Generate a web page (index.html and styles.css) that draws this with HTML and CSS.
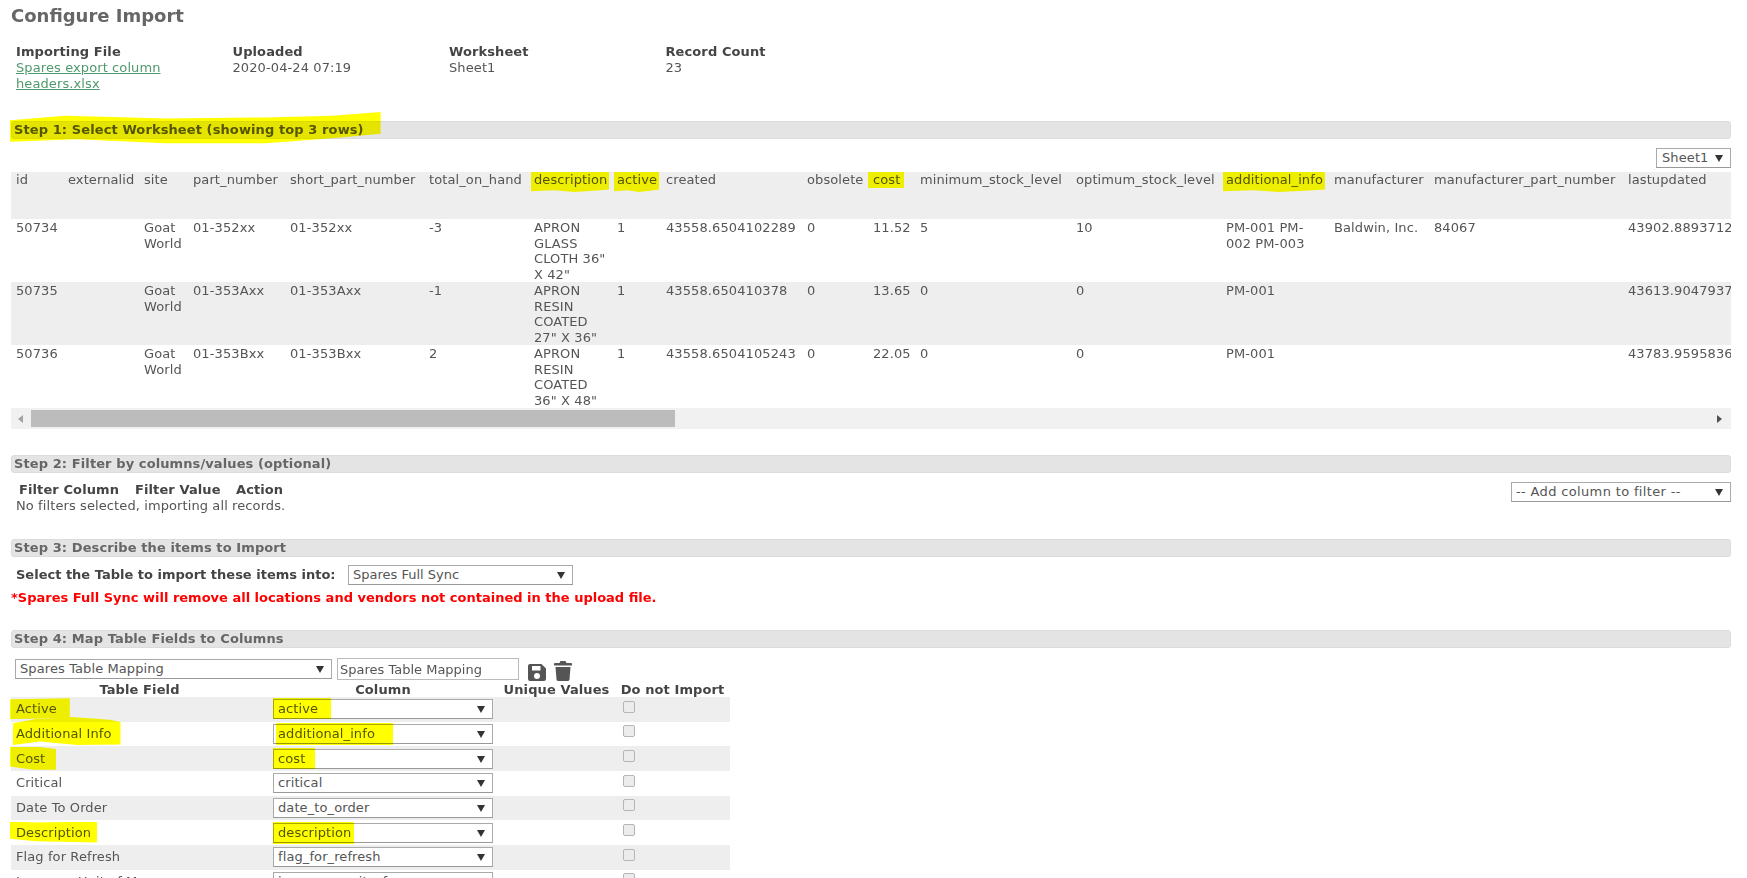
FILE: index.html
```html
<!DOCTYPE html>
<html lang="en">
<head>
    <meta charset="UTF-8">
    <meta name="viewport" content="width=device-width, initial-scale=1.0">
    <title>Configure Import</title>
    <link rel="stylesheet" href="styles.css">
</head>
<body>

<h1>Configure Import</h1>

<div class="file-info">
    <div><b>Importing File</b><br><a href="#">Spares export column headers.xlsx</a></div>
    <div><b>Uploaded</b><br>2020-04-24 07:19</div>
    <div><b>Worksheet</b><br>Sheet1</div>
    <div><b>Record Count</b><br>23</div>
</div>

<div class="step step-1"><span class="hl hl-step">Step 1: Select Worksheet (showing top 3 rows)</span></div>

<div class="sheet-row">
    <div class="sel sel-sheet">Sheet1</div>
</div>

<div class="preview">
    <table class="preview-table">
        <colgroup>
            <col class="c52"><col class="c76"><col class="c49"><col class="c97"><col class="c139"><col class="c105">
            <col class="c83"><col class="c49"><col class="c141"><col class="c66"><col class="c47"><col class="c156">
            <col class="c150"><col class="c108"><col class="c100"><col class="c194"><col class="c200">
        </colgroup>
        <tr>
            <th>id</th><th>externalid</th><th>site</th><th>part_number</th><th>short_part_number</th><th>total_on_hand</th>
            <th><span class="hl">description</span></th><th><span class="hl">active</span></th><th>created</th><th>obsolete</th>
            <th><span class="hl hl-up">cost</span></th><th>minimum_stock_level</th><th>optimum_stock_level</th>
            <th><span class="hl">additional_info</span></th><th>manufacturer</th><th>manufacturer_part_number</th><th>lastupdated</th>
        </tr>
        <tr>
            <td>50734</td><td></td><td>Goat World</td><td>01-352xx</td><td>01-352xx</td><td>-3</td>
            <td>APRON GLASS CLOTH 36" X 42"</td><td>1</td><td>43558.6504102289</td><td>0</td><td>11.52</td><td>5</td><td>10</td>
            <td class="info">PM-001 PM-002 PM-003</td><td>Baldwin, Inc.</td><td>84067</td><td>43902.8893712963</td>
        </tr>
        <tr>
            <td>50735</td><td></td><td>Goat World</td><td>01-353Axx</td><td>01-353Axx</td><td>-1</td>
            <td>APRON RESIN COATED 27" X 36"</td><td>1</td><td>43558.650410378</td><td>0</td><td>13.65</td><td>0</td><td>0</td>
            <td class="info">PM-001</td><td></td><td></td><td>43613.9047937269</td>
        </tr>
        <tr>
            <td>50736</td><td></td><td>Goat World</td><td>01-353Bxx</td><td>01-353Bxx</td><td>2</td>
            <td>APRON RESIN COATED 36" X 48"</td><td>1</td><td>43558.6504105243</td><td>0</td><td>22.05</td><td>0</td><td>0</td>
            <td class="info">PM-001</td><td></td><td></td><td>43783.9595836227</td>
        </tr>
    </table>
</div>

<div class="scrollbar">
    <span class="arrow-left"></span>
    <div class="scroll-track"><div class="scroll-thumb"></div></div>
    <span class="arrow-right"></span>
</div>

<div class="step step-2">Step 2: Filter by columns/values (optional)</div>

<div class="filters">
    <div>
        <div class="filter-head"><b>Filter Column</b><b>Filter Value</b><b>Action</b></div>
        <div class="filter-none">No filters selected, importing all records.</div>
    </div>
    <div class="sel sel-filter">-- Add column to filter --</div>
</div>

<div class="step step-3">Step 3: Describe the items to Import</div>

<div class="table-pick">
    <b>Select the Table to import these items into:</b>
    <div class="sel sel-table">Spares Full Sync</div>
</div>
<div class="warning">*Spares Full Sync will remove all locations and vendors not contained in the upload file.</div>

<div class="step step-4">Step 4: Map Table Fields to Columns</div>

<div class="mapping-bar">
    <div class="sel sel-mapping">Spares Table Mapping</div>
    <input class="mapping-name" type="text" value="Spares Table Mapping">
    <svg class="icon-save" viewBox="0 0 18 17" width="18" height="17">
        <path fill="#555" fill-rule="evenodd" d="M2 0h11.5L18 4.5V15a2 2 0 0 1-2 2H2a2 2 0 0 1-2-2V2a2 2 0 0 1 2-2zM4 2v4.5h8.5V2zM9 9a3 3 0 1 0 0 6 3 3 0 0 0 0-6z"/>
    </svg>
    <svg class="icon-trash" viewBox="0 0 18 20" width="18" height="20">
        <path fill="#555" d="M6.5 0h5l1 2H17a1 1 0 0 1 1 1v1.500H0V3a1 1 0 0 1 1-1h4.500zM1.500 6h15l-1 12.500A1.600 1.600 0 0 1 14 20H4a1.600 1.600 0 0 1-1.500-1.500z"/>
    </svg>
</div>

<table class="mapping">
    <colgroup><col class="m257"><col class="m230"><col class="m117"><col class="m115"></colgroup>
    <tr><th>Table Field</th><th>Column</th><th>Unique Values</th><th>Do not Import</th></tr>
    <tr>
        <td><span class="hl hl-active">Active</span></td>
        <td><div class="sel sel-col"><span class="hl hl-col hl-col-active">active</span></div></td><td></td>
        <td><input class="check" type="checkbox"></td>
    </tr>
    <tr>
        <td><span class="hl hl-addinfo">Additional Info</span></td>
        <td><div class="sel sel-col"><span class="hl hl-col hl-col-addinfo">additional_info</span></div></td><td></td>
        <td><input class="check" type="checkbox"></td>
    </tr>
    <tr>
        <td><span class="hl hl-cost">Cost</span></td>
        <td><div class="sel sel-col"><span class="hl hl-col hl-col-cost">cost</span></div></td><td></td>
        <td><input class="check" type="checkbox"></td>
    </tr>
    <tr>
        <td>Critical</td>
        <td><div class="sel sel-col">critical</div></td><td></td>
        <td><input class="check" type="checkbox"></td>
    </tr>
    <tr>
        <td>Date To Order</td>
        <td><div class="sel sel-col">date_to_order</div></td><td></td>
        <td><input class="check" type="checkbox"></td>
    </tr>
    <tr>
        <td><span class="hl hl-desc">Description</span></td>
        <td><div class="sel sel-col"><span class="hl hl-col hl-col-desc">description</span></div></td><td></td>
        <td><input class="check" type="checkbox"></td>
    </tr>
    <tr>
        <td>Flag for Refresh</td>
        <td><div class="sel sel-col">flag_for_refresh</div></td><td></td>
        <td><input class="check" type="checkbox"></td>
    </tr>
    <tr>
        <td>Issuance Unit of Measure</td>
        <td><div class="sel sel-col">issuance_unit_of_measure</div></td><td></td>
        <td><input class="check" type="checkbox"></td>
    </tr>
</table>

</body>
</html>
```

FILE: styles.css
```css
html, body {
    height: 878px;
    overflow: hidden;
}

body {
    font-family: 'DejaVu Sans', Verdana, sans-serif;
    font-size: 13px;
    line-height: 16px;
    letter-spacing: 0.1px;
    color: #555;
    background-color: #fff;
    margin: 0;
    padding: 0 16px 0 11px;
}

b, th {
    color: #444;
    font-weight: bold;
}

h1 {
    font-size: 18px;
    line-height: 22px;
    letter-spacing: 0;
    color: #666;
    margin: 0;
    padding-top: 5px;
}

.file-info {
    display: grid;
    grid-template-columns: repeat(4, 216.5px);
    margin-top: 17px;
    padding-left: 5px;
    height: 48px;
}

.file-info > div {
    width: 160px;
}

.file-info a {
    color: #4f9a6c;
}

/* section bars */
.step {
    box-sizing: border-box;
    height: 18px;
    line-height: 16px;
    padding-left: 2px;
    font-weight: bold;
    color: #666;
    background-color: #e4e4e4;
    border: 1px solid #dcdcdc;
    border-radius: 3px;
}

.step-1 { margin-top: 29px; color: #555; }
.step-2 { margin-top: 26px; }
.step-3 { margin-top: 24px; }
.step-4 { margin-top: 24px; }

/* marker pen */
.hl {
    position: relative;
}

.hl::after {
    content: "";
    position: absolute;
    top: -1px;
    right: -2px;
    bottom: -5px;
    left: -3px;
    background-color: #ff0;
    mix-blend-mode: multiply;
    clip-path: polygon(0 0, 100% 0, 100% 88%, 80% 94%, 55% 100%, 30% 92%, 0 96%);
}

.hl-up::after {
    top: -4px;
    bottom: -1px;
    right: -4px;
    left: -5px;
    clip-path: none;
}

.hl-step::after {
    top: -10px;
    bottom: -7px;
    left: -4px;
    right: -17px;
    clip-path: polygon(0 26%, 15% 12%, 42% 20%, 69% 17%, 87% 12%, 100% 0, 100% 68%, 87% 82%, 69% 98%, 42% 98%, 18% 85%, 0 93%);
}

.hl-active::after {
    top: -3px;
    bottom: -3px;
    left: -6px;
    right: -13px;
    clip-path: polygon(0 4%, 100% 0, 100% 92%, 55% 96%, 0 100%);
}

.hl-addinfo::after {
    top: -9px;
    bottom: -4px;
    left: -3px;
    right: -9px;
    clip-path: polygon(0 22%, 20% 8%, 55% 0, 90% 10%, 100% 18%, 100% 98%, 60% 100%, 25% 88%, 0 100%);
}

.hl-cost::after {
    top: -4px;
    bottom: -4px;
    left: -6px;
    right: -11px;
    clip-path: polygon(0 0, 60% 0, 100% 10%, 100% 100%, 50% 100%, 0 86%);
}

.hl-desc::after {
    top: -3px;
    bottom: -3px;
    left: -6px;
    right: -6px;
    clip-path: polygon(0 0, 30% 4%, 100% 0, 100% 100%, 30% 94%, 0 82%);
}

.hl-col::after {
    top: -3px;
    bottom: -3px;
    left: -5px;
    clip-path: none;
}

.hl-col-active::after { right: -13px; }
.hl-col-cost::after { right: -10px; }
.hl-col-desc::after { right: -3px; bottom: -4px; }
.hl-col-addinfo::after { left: -2px; right: -18px; bottom: -4px; }

/* drop downs */
.sel {
    position: relative;
    box-sizing: border-box;
    height: 20px;
    line-height: 18px;
    padding-left: 4px;
    white-space: nowrap;
    background-color: #fff;
    border: 1px solid #aaa;
    border-bottom-color: #999;
}

.sel::before {
    content: "";
    position: absolute;
    top: 6px;
    right: 7px;
    border-top: 7px solid #333;
    border-left: 4px solid transparent;
    border-right: 4px solid transparent;
}

.sel-sheet { width: 75px; padding-left: 5px; }
.sel-filter { width: 220px; letter-spacing: 0.35px; }
.sel-table { width: 225px; }
.sel-mapping { width: 317px; }
.sel-col { width: 220px; }

.sheet-row {
    display: flex;
    justify-content: flex-end;
    margin-top: 9px;
}

/* worksheet preview */
.preview {
    margin-top: 4px;
    overflow: hidden;
}

.preview-table {
    table-layout: fixed;
    width: 1812px;
    border-collapse: collapse;
}

.preview-table th {
    height: 47px;
    padding: 0 0 0 5px;
    font-weight: normal;
    color: #555;
    text-align: left;
    vertical-align: top;
    background-color: #eee;
}

.preview-table td {
    height: 63px;
    box-sizing: border-box;
    padding: 1px 0 0 5px;
    line-height: 15.5px;
    vertical-align: top;
}

.preview-table td.info {
    padding-right: 6px;
}

.preview-table tr:nth-child(3) td {
    background-color: #eee;
}

.c47 { width: 47px; }
.c49 { width: 49px; }
.c52 { width: 52px; }
.c66 { width: 66px; }
.c76 { width: 76px; }
.c83 { width: 83px; }
.c97 { width: 97px; }
.c100 { width: 100px; }
.c105 { width: 105px; }
.c108 { width: 108px; }
.c139 { width: 139px; }
.c141 { width: 141px; }
.c150 { width: 150px; }
.c156 { width: 156px; }
.c194 { width: 194px; }
.c200 { width: 200px; }

.scrollbar {
    display: flex;
    align-items: center;
    height: 21px;
    background-color: #f1f1f1;
}

.scroll-track {
    flex: 1;
    height: 17px;
}

.scroll-thumb {
    width: 644px;
    height: 17px;
    background-color: #bcbcbc;
}

.arrow-left {
    width: 0;
    margin: 0 8px 0 7px;
    border-top: 4px solid transparent;
    border-bottom: 4px solid transparent;
    border-right: 5px solid #a3a3a3;
}

.arrow-right {
    width: 0;
    margin: 0 9px 0 7px;
    border-top: 4px solid transparent;
    border-bottom: 4px solid transparent;
    border-left: 5px solid #505050;
}

/* step 2 */
.filters {
    display: flex;
    justify-content: space-between;
    align-items: flex-start;
    margin-top: 9px;
    height: 33px;
}

.filter-head {
    display: grid;
    grid-template-columns: 116px 101px auto;
    padding-left: 8px;
}

.filter-none {
    padding-left: 5px;
}

/* step 3 */
.table-pick {
    display: flex;
    align-items: center;
    margin-top: 8px;
    padding-left: 5px;
    letter-spacing: 0;
}

.table-pick b {
    width: 332px;
}

.warning {
    margin-top: 5px;
    font-weight: bold;
    letter-spacing: 0;
    color: #f00;
}

/* step 4 */
.mapping-bar {
    display: flex;
    align-items: center;
    margin-top: 10px;
    padding-left: 4px;
    height: 22px;
}

.mapping-name {
    box-sizing: border-box;
    width: 182px;
    height: 22px;
    margin: 0 0 0 5px;
    padding: 0 2px;
    font: inherit;
    color: #555;
    background-color: #fff;
    border: 1px solid #bbb;
}

.icon-save {
    margin: 6px 0 0 9px;
}

.icon-trash {
    margin: 4px 0 0 8px;
}

.mapping {
    table-layout: fixed;
    width: 719px;
    margin-top: 2px;
    border-collapse: collapse;
}

.m257 { width: 257px; }
.m230 { width: 230px; }
.m117 { width: 117px; }
.m115 { width: 115px; }

.mapping th {
    height: 15px;
    padding: 0;
    white-space: nowrap;
    text-align: center;
    line-height: 15px;
}

.mapping td {
    box-sizing: border-box;
    height: 24.67px;
    padding: 0 0 0 5px;
    white-space: nowrap;
}

.mapping tr:nth-child(even) td {
    background-color: #eee;
}

.check {
    appearance: none;
    display: block;
    box-sizing: border-box;
    width: 12px;
    height: 12px;
    margin: -5px 0 0 3px;
    background-color: #ececec;
    border: 1px solid #b5b5b5;
    border-radius: 2px;
}
```
